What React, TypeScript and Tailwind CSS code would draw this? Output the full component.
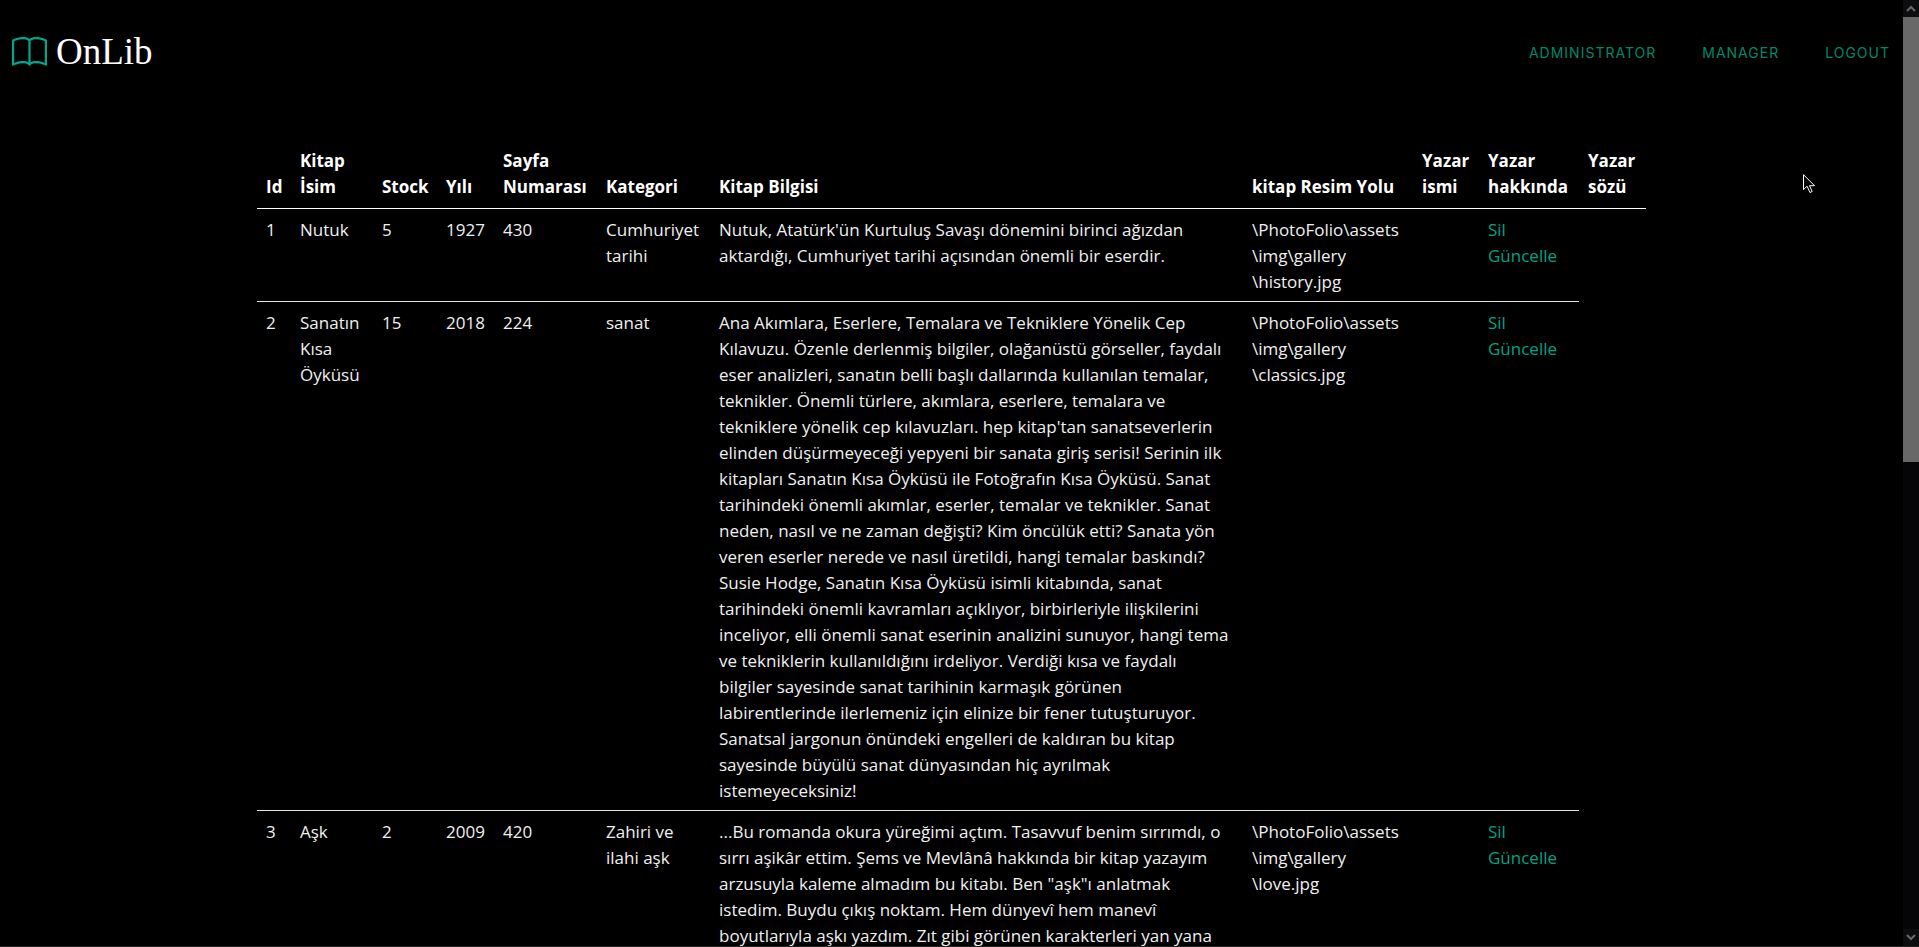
import React from "react";
import { BsBook } from "react-icons/bs";

type Book = {
  id: number;
  name: string;
  stock: number;
  year: number;
  pages: number;
  category: string;
  info: string;
  image: string[];
};

const books: Book[] = [
  {
    id: 1,
    name: "Nutuk",
    stock: 5,
    year: 1927,
    pages: 430,
    category: "Cumhuriyet tarihi",
    info: "Nutuk, Atatürk'ün Kurtuluş Savaşı dönemini birinci ağızdan aktardığı, Cumhuriyet tarihi açısından önemli bir eserdir.",
    image: ["\\PhotoFolio\\assets", "\\img\\gallery", "\\history.jpg"],
  },
  {
    id: 2,
    name: "Sanatın Kısa Öyküsü",
    stock: 15,
    year: 2018,
    pages: 224,
    category: "sanat",
    info: "Ana Akımlara, Eserlere, Temalara ve Tekniklere Yönelik Cep Kılavuzu. Özenle derlenmiş bilgiler, olağanüstü görseller, faydalı eser analizleri, sanatın belli başlı dallarında kullanılan temalar, teknikler. Önemli türlere, akımlara, eserlere, temalara ve tekniklere yönelik cep kılavuzları. hep kitap'tan sanatseverlerin elinden düşürmeyeceği yepyeni bir sanata giriş serisi! Serinin ilk kitapları Sanatın Kısa Öyküsü ile Fotoğrafın Kısa Öyküsü. Sanat tarihindeki önemli akımlar, eserler, temalar ve teknikler. Sanat neden, nasıl ve ne zaman değişti? Kim öncülük etti? Sanata yön veren eserler nerede ve nasıl üretildi, hangi temalar baskındı? Susie Hodge, Sanatın Kısa Öyküsü isimli kitabında, sanat tarihindeki önemli kavramları açıklıyor, birbirleriyle ilişkilerini inceliyor, elli önemli sanat eserinin analizini sunuyor, hangi tema ve tekniklerin kullanıldığını irdeliyor. Verdiği kısa ve faydalı bilgiler sayesinde sanat tarihinin karmaşık görünen labirentlerinde ilerlemeniz için elinize bir fener tutuşturuyor. Sanatsal jargonun önündeki engelleri de kaldıran bu kitap sayesinde büyülü sanat dünyasından hiç ayrılmak istemeyeceksiniz!",
    image: ["\\PhotoFolio\\assets", "\\img\\gallery", "\\classics.jpg"],
  },
  {
    id: 3,
    name: "Aşk",
    stock: 2,
    year: 2009,
    pages: 420,
    category: "Zahiri ve ilahi aşk",
    info: "...Bu romanda okura yüreğimi açtım. Tasavvuf benim sırrımdı, o sırrı aşikâr ettim. Şems ve Mevlânâ hakkında bir kitap yazayım arzusuyla kaleme almadım bu kitabı. Ben \"aşk\"ı anlatmak istedim. Buydu çıkış noktam. Hem dünyevî hem manevî boyutlarıyla aşkı yazdım. Zıt gibi görünen karakterleri yan yana",
    image: ["\\PhotoFolio\\assets", "\\img\\gallery", "\\love.jpg"],
  },
];

const columns = [
  { label: "Id", width: "w-[34px]" },
  { label: "Kitap İsim", width: "w-[82px]" },
  { label: "Stock", width: "w-[64px]" },
  { label: "Yılı", width: "w-[57px]" },
  { label: "Sayfa Numarası", width: "w-[103px]" },
  { label: "Kategori", width: "w-[113px]" },
  { label: "Kitap Bilgisi", width: "w-auto" },
  { label: "kitap Resim Yolu", width: "w-[170px]" },
  { label: "Yazar ismi", width: "w-[66px]" },
  { label: "Yazar hakkında", width: "w-[100px]" },
  { label: "Yazar sözü", width: "w-[67px]" },
];

const navItems = ["Administrator", "Manager", "Logout"];

function Header() {
  return (
    <header className="flex items-center justify-between pt-8 pr-[13px] pl-3">
      <a href="#" className="flex items-center gap-[9px]">
        <BsBook className="size-[35px] text-[#00a78e]" aria-hidden="true" />
        <span className="font-['Liberation_Serif',serif] text-[37px] leading-10 text-white">
          OnLib
        </span>
      </a>
      <nav className="pt-0.5">
        <ul className="flex gap-[46px] font-['Inter',sans-serif] text-sm leading-5 tracking-[1px] text-[#00876b] uppercase">
          {navItems.map((item) => (
            <li key={item}>
              <a href="#">{item}</a>
            </li>
          ))}
        </ul>
      </nav>
    </header>
  );
}

function BookTable() {
  return (
    <table className="w-full table-fixed border-collapse text-left text-[17px] leading-[26px] text-[#f0f0f0]">
      <colgroup>
        {columns.map((c) => (
          <col key={c.label} className={c.width} />
        ))}
      </colgroup>
      <thead className="text-white">
        <tr>
          {columns.map((c) => (
            <th
              key={c.label}
              scope="col"
              className="border-b border-white px-[9px] py-2 align-bottom font-bold"
            >
              {c.label}
            </th>
          ))}
        </tr>
      </thead>
      <tbody className="align-top [&_td]:border-b [&_td]:border-[#e4e4e4] [&_td]:px-[9px] [&_td]:pt-2 [&_td]:pb-[6px]">
        {books.map((b) => (
          <tr key={b.id}>
            <td>{b.id}</td>
            <td>{b.name}</td>
            <td>{b.stock}</td>
            <td>{b.year}</td>
            <td>{b.pages}</td>
            <td>{b.category}</td>
            <td>
              <p className="pr-1">{b.info}</p>
            </td>
            <td>
              {b.image.map((part) => (
                <React.Fragment key={part}>
                  <wbr />
                  {part}
                </React.Fragment>
              ))}
            </td>
            <td></td>
            <td>
              <a href="#" className="block w-fit text-[#00a383]">
                Sil
              </a>
              <a href="#" className="block w-fit text-[#00a383]">
                Güncelle
              </a>
            </td>
          </tr>
        ))}
      </tbody>
    </table>
  );
}

function Scrollbar() {
  return (
    <div className="flex w-4 shrink-0 flex-col bg-[#050507]" aria-hidden="true">
      <div className="flex h-[17px] items-center justify-center bg-[#0d0d0f]">
        <svg viewBox="0 0 10 7" className="h-[7px] w-[10px]" fill="none" stroke="#686868" strokeWidth="2">
          <path d="M1 6l4-4 4 4" />
        </svg>
      </div>
      <div className="h-[47%] bg-[#686868]" />
      <div className="mt-auto flex h-[17px] items-center justify-center bg-[#0d0d0f]">
        <svg viewBox="0 0 10 7" className="h-[7px] w-[10px]" fill="none" stroke="#686868" strokeWidth="2">
          <path d="M1 1l4 4 4-4" />
        </svg>
      </div>
    </div>
  );
}

function Cursor() {
  return (
    <svg
      viewBox="0 0 12 20"
      className="absolute top-[174px] left-[1803px] h-5 w-3"
      fill="#000"
      stroke="#fff"
      strokeWidth="1"
      aria-hidden="true"
    >
      <path d="M.5 .7v15l3.500-3.500 3 6.300 2.200-1-2.700-5.800h5z" />
    </svg>
  );
}

export default function App() {
  return (
    <div className="relative flex h-screen overflow-hidden border-b border-[#222] bg-black font-['Open_Sans',sans-serif]">
      <div className="min-w-0 flex-1 overflow-hidden">
        <Header />
        <main className="mx-auto max-w-[1389px] pt-[68px]">
          <BookTable />
        </main>
      </div>
      <Scrollbar />
      <Cursor />
    </div>
  );
}
